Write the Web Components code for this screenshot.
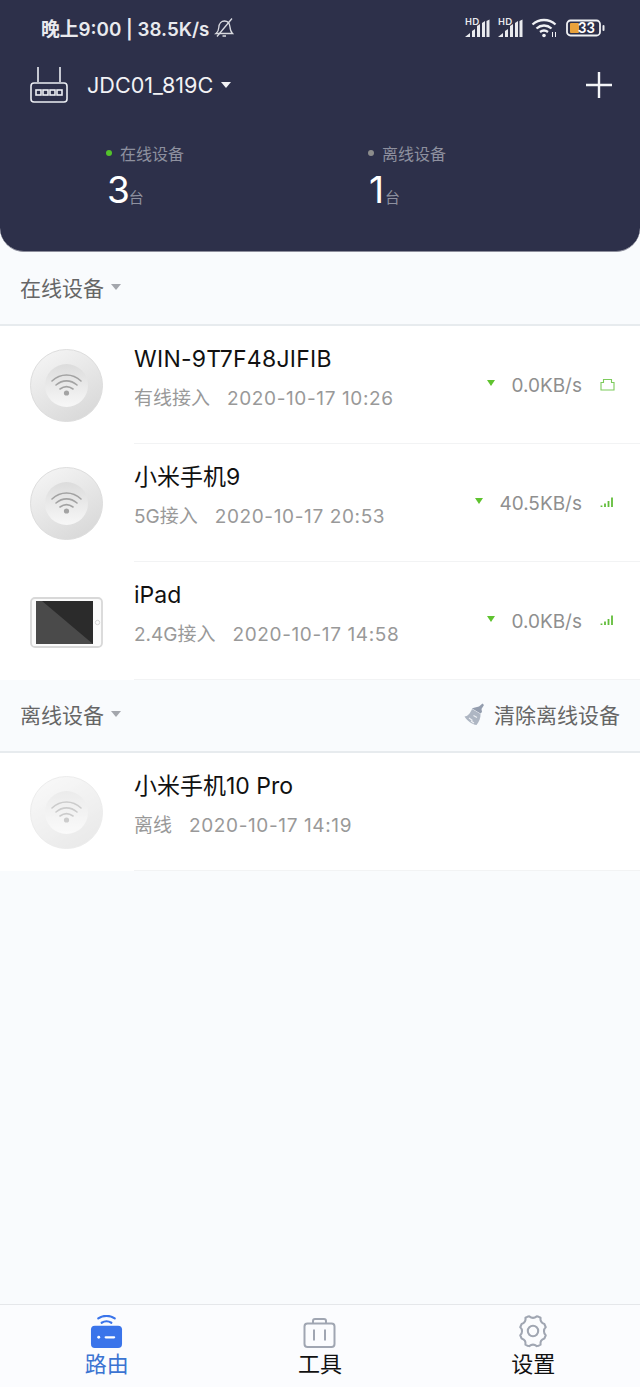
<!DOCTYPE html>
<html lang="zh"><head><meta charset="utf-8"><title>路由</title>
<style>
html,body{margin:0;padding:0;height:100%}
body{width:640px;height:1387px;overflow:hidden;background:#f9fbfd;font-family:Inter,"Noto Sans CJK SC",sans-serif;display:flex;flex-direction:column}
main{flex:1;min-height:0;display:block}
</style></head><body>
<template id="t-signal"><style>
:host{display:block;position:relative;width:26px;height:20px}
svg{display:block}
span{position:absolute;left:0;top:-1px;font:700 9px/9px Lato,sans-serif;color:#e9eaee;letter-spacing:.3px}
</style><svg width="26" height="20" viewBox="0 0 26 20"><path fill="#e9eaee" d="M0 19l5-4v4zM7 19v-6l3-2v8zM12 19V8l3-2v13zM17 19V5l3-2v16zM21.500 19V3l3-1.500V19z"/></svg><span>HD</span></template>

<template id="t-status"><style>
:host{display:flex;height:56px;align-items:center;justify-content:space-between;padding:0 34px 0 41px;color:#e9eaee;font-size:18.800px;font-weight:600}
.l{display:flex;align-items:center;gap:5px;white-space:nowrap;margin-top:-1px}
.r{display:flex;align-items:center;gap:7px}
svg{display:block}
</style>
<div class="l"><span>晚上9:00 | 38.5K/s</span>
<svg width="20" height="22" viewBox="0 0 20 22" fill="none" stroke="#d9dae0" stroke-width="1.3"><path d="M2 16.500c2-1.500 2.600-3 2.800-6C5 6.500 7.500 4 10.500 4s5 2 5.400 5.600c.3 3 1 5.400 2.600 6.900H2z"/><path d="M8.500 19h3.500M3 19.500 18 1.500"/></svg></div>
<div class="r">
<signal-bars></signal-bars><signal-bars></signal-bars>
<svg width="28" height="22" viewBox="0 0 28 22" fill="none" stroke="#f0f1f4" stroke-width="2.300"><path d="M1.500 7.500C8 1.500 18 1.500 24.500 7.500M5.500 11.500c4.500-4 10.500-4 15 0M9 15c2.700-2 5.300-2 8 0"/><circle cx="13" cy="18.500" r="1.800" fill="#f0f1f4" stroke="none"/><path stroke-width="1" d="M21.500 15v5M24.500 15v5"/></svg>
<svg width="40" height="18" viewBox="0 0 40 18"><rect x="1" y="1.500" width="33" height="15" rx="3.500" fill="none" stroke="#f0f1f4" stroke-width="1.800"/><rect x="4" y="4" width="9" height="10" rx="1" fill="#e9a23b"/><rect x="36.500" y="6" width="2" height="6" rx="1" fill="#e9eaee"/><text x="12" y="14" font-family="Lato" font-size="14.500" font-weight="700" fill="#fff">33</text></svg>
</div></template>

<template id="t-header"><style>
:host{display:block;height:252px;box-sizing:border-box;background:#2d304a;border-radius:0 0 24px 24px;color:#fff;border-bottom:1px solid #8d8e9c}
.top{display:flex;align-items:center;height:58px;padding:0 28px 0 30px}
.name{font-size:21.600px;margin-left:19px;color:#f2f2f5;white-space:nowrap}
.caret{width:0;height:0;border:5.500px solid transparent;border-top:6px solid #f2f2f5;border-bottom:0;margin-left:8px}
.sp{flex:1}
svg{display:block}
.stats{display:grid;grid-template-columns:262px 1fr;padding:27px 0 0 106px}
</style>
<slot name="status"></slot>
<div class="top">
<svg width="38" height="38" viewBox="0 0 38 38" fill="none" stroke="#eceef3" stroke-width="1.600"><path d="M8 1v15M30 1v15"/><rect x="1" y="17" width="36" height="19" rx="3"/><rect x="6" y="24" width="5" height="5"/><rect x="13" y="24" width="5" height="5"/><rect x="20" y="24" width="5" height="5"/><rect x="27" y="24" width="5" height="5"/></svg>
<span class="name"><slot name="name"></slot></span><span class="caret"></span><span class="sp"></span>
<svg width="26" height="26" viewBox="0 0 26 26" stroke="#f4f5f8" stroke-width="2.400"><path d="M13 0v26M0 13h26"/></svg>
</div>
<div class="stats"><slot></slot></div></template>

<template id="t-stat"><style>
:host{display:block;color:#fff}
.lab{display:flex;align-items:center;font-size:16px;color:#8e909f;height:24px}
.dot{width:6px;height:6px;border-radius:50%;margin-right:8px;background:var(--dot,#999)}
.num{display:flex;align-items:baseline;margin-top:2px;height:46px;line-height:46px}
b{font-weight:400;font-size:37px;margin-left:1px}
i{font-style:normal;font-size:15px;color:#8e909f;margin-left:var(--gap,-1px)}
</style><div class="lab"><span class="dot"></span><slot name="label"></slot></div>
<div class="num"><b><slot name="count"></slot></b><i>台</i></div></template>

<template id="t-section"><style>
:host{display:flex;box-sizing:border-box;height:var(--h,74px);align-items:center;padding:0 20px var(--pb,2px);border-bottom:2px solid #e7ebee;color:#666;font-size:21px}
.caret{width:0;height:0;border:5px solid transparent;border-top:6px solid #a4a7ad;border-bottom:0;margin-left:7px}
.sp{flex:1}
</style><slot></slot><span class="caret"></span><span class="sp"></span><slot name="action"></slot></template>

<template id="t-clear"><style>
:host{display:flex;align-items:center;gap:7px;color:#666;font-size:21px}
svg{display:block}
</style><svg width="23" height="23" viewBox="0 0 23 23"><path fill="#aeb6c3" d="M8 6 16.500 11c.4 3.500-1.500 8-4 11C8 21.500 3.500 18 .5 13.500 3.500 13.500 6.500 10 8 6z"/><path fill="#949dae" d="M9 5 15 3.500 18.500.5l1.500 1.500-2.500 4 .5 3-1.500 1.500L8 5.500z"/><path stroke="#eef0f4" stroke-width="1.100" fill="none" d="M5 15l3.500 2.500M9.500 12.500l3.500 2M7 18l3 2"/></svg><slot></slot></template>

<template id="t-row"><style>
:host{display:flex;height:118px;background:#fff;--line:#f2f3f4}
.ic{width:134px;flex:none;display:flex;align-items:center;padding-left:30px;box-sizing:border-box}
.main{flex:1;display:flex;align-items:center;border-bottom:1px solid var(--line);padding-right:25px;min-width:0}
.tx{flex:1;min-width:0;margin-bottom:12px}
.t{font-size:23px;color:#111;line-height:30px;white-space:nowrap}
.s{font-size:19px;color:#999;line-height:30px;margin-top:10px;white-space:nowrap}
.d{margin-left:17px;letter-spacing:.62px}
.sp{display:flex;align-items:center;font-size:19px;color:#8f8f8f;margin-top:1px}
:host([offline]) .sp{display:none}
.tri{width:0;height:0;border:4px solid transparent;border-top:6px solid #5fc32f;border-bottom:0;margin-right:16px;margin-top:-4px}
.end{margin-left:18px;width:15px;display:flex;margin-top:-2px}
</style>
<div class="ic"><slot name="icon"></slot></div>
<div class="main"><div class="tx"><div class="t"><slot name="title"></slot></div><div class="s"><slot name="sub"></slot><span class="d"><slot name="date"></slot></span></div></div>
<div class="sp"><span class="tri"></span><slot name="speed"></slot><span class="end"><slot name="end"></slot></span></div></div></template>

<template id="t-disc"><style>:host{display:block;width:73px;height:73px}svg{display:block}</style>
<svg width="73" height="73" viewBox="0 0 73 73"><defs>
<linearGradient id="a" x1="0" y1="0" x2=".6" y2="1"><stop offset="0" stop-color="#f7f7f7"/><stop offset="1" stop-color="#dadada"/></linearGradient>
<linearGradient id="b" x1="0" y1="0" x2="0" y2="1"><stop offset="0" stop-color="#dcdcdc"/><stop offset="1" stop-color="#f7f7f7"/></linearGradient></defs>
<circle cx="36.500" cy="36.500" r="36" fill="url(#a)" stroke="#ddd" stroke-width="1"/>
<circle cx="36.500" cy="36.500" r="21.500" fill="url(#b)"/>
<g fill="none" stroke="#a3a3a3" stroke-width="1.600" stroke-linecap="round"><path d="M22 32c8.500-8 20.500-8 29 0M26 36c6.500-5.500 14.500-5.500 21 0M30 40c4-3 9-3 13 0"/></g><circle cx="36.500" cy="44" r="2.600" fill="#a3a3a3"/></svg></template>

<template id="t-tablet"><style>:host{display:block;margin-top:2px}svg{display:block}</style>
<svg width="73" height="51" viewBox="0 0 73 51"><rect x="1" y="1" width="71" height="49" rx="4" fill="#fbfbfb" stroke="#d8d8d8" stroke-width="1.800"/><rect x="6" y="4" width="57" height="43" fill="#4a4a4a"/><path d="M12 4h51v43z" fill="#2b2b2b"/><circle cx="67.500" cy="25.500" r="2.200" fill="none" stroke="#d4d4d4"/></svg></template>

<template id="t-tabs"><style>
:host{display:grid;grid-template-columns:repeat(3,1fr);height:83px;box-sizing:border-box;border-top:1px solid #e5e7ea;background:#fbfcfe}
</style><slot></slot></template>

<template id="t-tab"><style>
:host{display:flex;flex-direction:column;align-items:center;font-size:22px;color:#111;line-height:28px;height:100%}
.i{height:43px;display:flex;align-items:flex-end;box-sizing:border-box;margin-bottom:2px}
:host([active]){color:#3b74d2}
svg{display:block}
</style><div class="i"><slot name="icon"></slot></div><slot></slot></template>

<router-head>
<status-bar slot="status"></status-bar>
<span slot="name">JDC01_819C</span>
<stat-block style="--dot:#53c22b"><span slot="label">在线设备</span><span slot="count">3</span></stat-block>
<stat-block style="--dot:#8c8c8c;--gap:1px"><span slot="label">离线设备</span><span slot="count">1</span></stat-block>
</router-head>

<main>
<section-head style="--h:74px;--pb:2px">在线设备</section-head>
<device-row><wifi-disc slot="icon"></wifi-disc><span slot="title" style="letter-spacing:.27px">WIN-9T7F48JIFIB</span><span slot="sub">有线接入</span><span slot="date">2020-10-17 10:26</span><span slot="speed">0.0KB/s</span>
<svg slot="end" width="15" height="13" viewBox="0 0 15 13" fill="none" stroke="#7dcb5c" stroke-width="1.100"><path d="M1 12V4.500h2.500v-3h8v3H14V12z"/></svg></device-row>
<device-row><wifi-disc slot="icon"></wifi-disc><span slot="title">小米手机9</span><span slot="sub">5G接入</span><span slot="date">2020-10-17 20:53</span><span slot="speed">40.5KB/s</span>
<svg slot="end" width="15" height="12" viewBox="0 0 15 12" stroke="#62bd3a" stroke-width="1.800"><path d="M1.500 11V9.500M5 11V7.500M8.500 11V5M12 11V1.500"/></svg></device-row>
<device-row><tablet-icon slot="icon"></tablet-icon><span slot="title">iPad</span><span slot="sub">2.4G接入</span><span slot="date">2020-10-17 14:58</span><span slot="speed">0.0KB/s</span>
<svg slot="end" width="15" height="12" viewBox="0 0 15 12" stroke="#62bd3a" stroke-width="1.800"><path d="M1.500 11V9.500M5 11V7.500M8.500 11V5M12 11V1.500"/></svg></device-row>
<section-head style="--h:73px;--pb:3px">离线设备<clear-action slot="action">清除离线设备</clear-action></section-head>
<device-row offline><wifi-disc slot="icon" style="opacity:.55"></wifi-disc><span slot="title">小米手机10 Pro</span><span slot="sub">离线</span><span slot="date">2020-10-17 14:19</span></device-row>
</main>

<tab-bar>
<tab-item active><svg slot="icon" width="33" height="33" viewBox="0 0 34 34"><path fill="none" stroke="#3a74ea" stroke-width="2.200" stroke-linecap="round" d="M8.500 3.500c5-3.500 12-3.500 17 0M12 8c3.300-2 6.700-2 10 0"/><rect x="1" y="11" width="32" height="23" rx="4" fill="#3a74ea"/><circle cx="9" cy="23" r="1.500" fill="#fff"/><rect x="15" y="21.800" width="11" height="2.400" rx="1.200" fill="#fff"/></svg>路由</tab-item>
<tab-item><svg slot="icon" width="33" height="30" viewBox="0 0 33 30" fill="none" stroke="#a0a6b2" stroke-width="2"><rect x="1.500" y="5.500" width="30" height="23.500" rx="3"/><path d="M10 5.500V3C10 2 11 1 12 1h9c1 0 2 1 2 2v2.500M11 11.500v11M22 11.500v11"/></svg>工具</tab-item>
<tab-item><svg slot="icon" width="32" height="34" viewBox="0 0 32 36" fill="none" stroke="#a0a6b2" stroke-width="2.200" stroke-linejoin="round"><path d="M12 2.500c2.500 2 5.500 2 8 0l2 .5 2 1c-.5 3 1 5.500 4 6.500l1.500 3.500c-2.500 2-2.500 6.500 0 8.500L28 26c-3 1-4.500 3.500-4 6.500l-2 1-2 .5c-2.500-2-5.500-2-8 0l-2-.5-2-1c.5-3-1-5.500-4-6.500l-1.500-3.500c2.500-2 2.500-6.500 0-8.500L4 10.500c3-1 4.500-3.500 4-6.500l2-1z"/><circle cx="16" cy="18" r="5.500"/></svg>设置</tab-item>
</tab-bar>

<script>
function tpl(name,id){customElements.define(name,class extends HTMLElement{constructor(){super();this.attachShadow({mode:'open'}).appendChild(document.getElementById(id).content.cloneNode(true));}});}
tpl('signal-bars','t-signal');tpl('status-bar','t-status');tpl('router-head','t-header');tpl('stat-block','t-stat');tpl('section-head','t-section');tpl('clear-action','t-clear');tpl('device-row','t-row');tpl('wifi-disc','t-disc');tpl('tablet-icon','t-tablet');tpl('tab-bar','t-tabs');tpl('tab-item','t-tab');
</script>
</body></html>
